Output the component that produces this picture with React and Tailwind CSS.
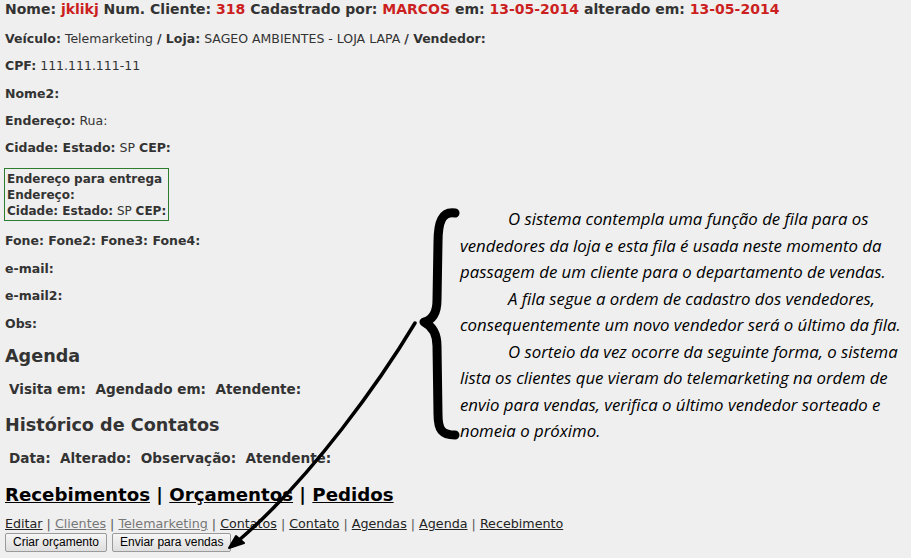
import { Fragment } from 'react';

const links = [
    { label: 'Editar' },
    { label: 'Clientes', visited: true },
    { label: 'Telemarketing', visited: true },
    { label: 'Contatos' },
    { label: 'Contato' },
    { label: 'Agendas' },
    { label: 'Agenda' },
    { label: 'Recebimento' },
];

function Field({ label, value }) {
    return (
        <>
            <b>{label}</b>
            {value ? <span className="font-normal"> {value}</span> : null}
        </>
    );
}

export default function App() {
    return (
        <div className="relative h-screen overflow-hidden bg-[#efefef] text-[#333] font-['DejaVu_Sans',Verdana,sans-serif] text-[12.5px]">
            <div className="pl-[5px]">
                {/* Cabeçalho */}
                <div className="text-[14px] font-bold leading-[18px]">
                    Nome: <span className="text-[#cc1f1f]">jklikj</span> Num. Cliente:{' '}
                    <span className="text-[#cc1f1f]">318</span> Cadastrado por:{' '}
                    <span className="text-[#cc1f1f]">MARCOS</span> em:{' '}
                    <span className="text-[#cc1f1f]">13-05-2014</span> alterado em:{' '}
                    <span className="text-[#cc1f1f]">13-05-2014</span>
                </div>

                <div className="flex flex-col gap-[12px] mt-[13px] leading-[15.3px]">
                    <div>
                        <b>Veículo:</b> Telemarketing <b>/ Loja:</b> SAGEO AMBIENTES - LOJA LAPA <b>/ Vendedor:</b>
                    </div>
                    <div><Field label="CPF:" value="111.111.111-11" /></div>
                    <div><b>Nome2:</b></div>
                    <div><Field label="Endereço:" value="Rua:" /></div>
                    <div><b>Cidade: Estado:</b> SP <b>CEP:</b></div>
                </div>

                <div className="mt-[12.5px] -ml-[1px] inline-block border border-[#2e7d2e] px-[2px] pt-[2px] pb-[1px] leading-[16px] text-[12px]">
                    <div><b>Endereço para entrega</b></div>
                    <div><b>Endereço:</b></div>
                    <div><b>Cidade: Estado:</b> SP <b>CEP:</b></div>
                </div>

                <div className="flex flex-col gap-[12.5px] mt-[12.5px] leading-[15px] font-bold">
                    <div>Fone: Fone2: Fone3: Fone4:</div>
                    <div>e-mail:</div>
                    <div>e-mail2:</div>
                    <div>Obs:</div>
                </div>

                <h2 className="mt-[14px] text-[17.6px] font-bold leading-[22px]">Agenda</h2>
                <div className="mt-[14px] pl-[4px] text-[13.6px] font-bold leading-[16px]">
                    Visita em:&nbsp; Agendado em:&nbsp; Atendente:
                </div>

                <h2 className="mt-[17px] text-[17.6px] font-bold leading-[22px]">Histórico de Contatos</h2>
                <div className="mt-[14px] pl-[4px] text-[13.6px] font-bold leading-[16px]">
                    Data:&nbsp; Alterado:&nbsp; Observação:&nbsp; Atendente:
                </div>

                <div className="mt-[18px] text-[18.2px] font-bold leading-[22px] text-black">
                    <a className="underline">Recebimentos</a> | <a className="underline">Orçamentos</a> |{' '}
                    <a className="underline">Pedidos</a>
                </div>

                <div className="mt-[10px] leading-[15px] text-[12.7px]">
                    {links.map((l, i) => (
                        <Fragment key={l.label}>
                            {i > 0 && <span className="text-[#555]"> | </span>}
                            <a className={`underline ${l.visited ? 'text-[#777]' : 'text-[#222]'}`}>{l.label}</a>
                        </Fragment>
                    ))}
                </div>

                <div className="flex gap-[5px] mt-[2px] font-['Liberation_Sans',Arial,sans-serif] text-[12px] text-black">
                    <button className="h-[19px] px-[7px] border border-[#9a9a9a] rounded-[2px] bg-gradient-to-b from-[#f6f6f6] to-[#dedede] leading-none">
                        Criar orçamento
                    </button>
                    <button className="h-[19px] px-[7px] border border-[#9a9a9a] rounded-[2px] bg-gradient-to-b from-[#f6f6f6] to-[#dedede] leading-none">
                        Enviar para vendas
                    </button>
                </div>
            </div>

            {/* Anotação sobre a tela */}
            <svg className="absolute left-0 top-0 pointer-events-none" width="911" height="558" viewBox="0 0 911 558">
                <path
                    d="M455 213 C442 211 438 222 438 242 L437 300 C437 314 432 320 424 322 C432 326 437 333 437 346 L438 414 C438 430 442 435 455 435"
                    fill="none"
                    stroke="#000"
                    strokeWidth="9"
                    strokeLinecap="round"
                    strokeLinejoin="round"
                />
                <path d="M415 323 C382 378 312 478 238 541" fill="none" stroke="#000" strokeWidth="3.5" strokeLinecap="round" />
                <path d="M229 548 L236 536 L244 543 Z" fill="#000" stroke="#000" strokeWidth="2" strokeLinejoin="round" />
            </svg>

            <div className="absolute left-[460px] top-[206px] w-[452px] text-black italic font-['Open_Sans',sans-serif] text-[16.8px] leading-[26.5px]">
                <p className="indent-[48px]">
                    O sistema contempla uma função de fila para os vendedores da loja e esta fila é usada neste momento da passagem de um cliente para o departamento de vendas.
                </p>
                <p className="indent-[48px]">
                    A fila segue a ordem de cadastro dos vendedores, consequentemente um novo vendedor será o último da fila.
                </p>
                <p className="indent-[48px]">
                    O sorteio da vez ocorre da seguinte forma, o sistema lista os clientes que vieram do telemarketing na ordem de envio para vendas, verifica o último vendedor sorteado e nomeia o próximo.
                </p>
            </div>
        </div>
    );
}
